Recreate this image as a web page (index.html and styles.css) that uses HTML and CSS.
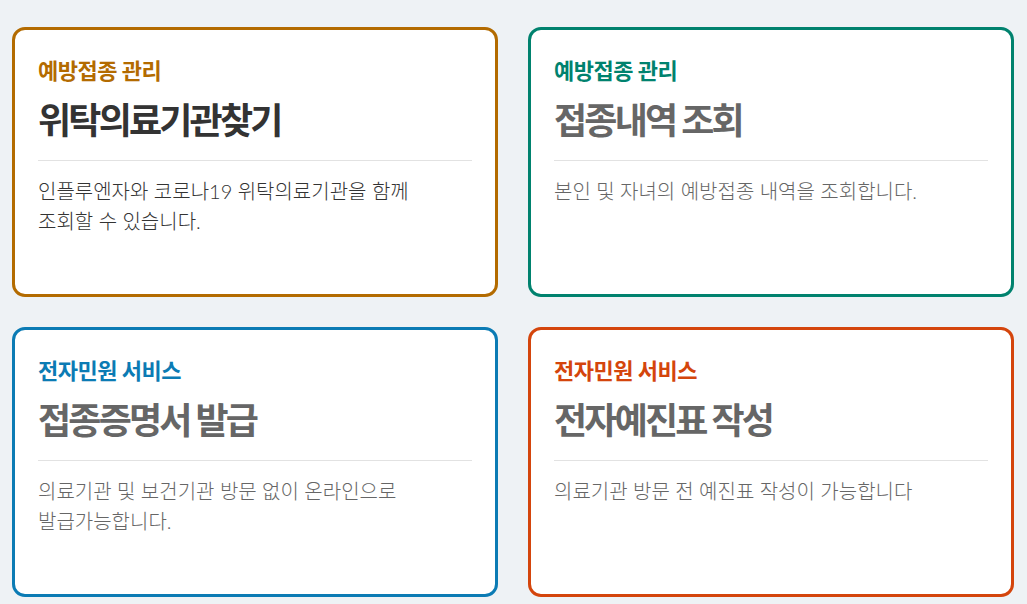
FILE: index.html
```html
<!DOCTYPE html>
<html lang="ko">
<head>
<meta charset="utf-8">
<title>예방접종 서비스</title>
<link rel="stylesheet" href="styles.css">
</head>
<body>
<div class="grid">
  <a class="card card-amber active" href="#">
    <p class="label">예방접종 관리</p>
    <h2 class="title">위탁의료기관찾기</h2>
    <p class="desc">인플루엔자와 코로나19 위탁의료기관을 함께<br>조회할 수 있습니다.</p>
  </a>
  <a class="card card-teal" href="#">
    <p class="label">예방접종 관리</p>
    <h2 class="title">접종내역 조회</h2>
    <p class="desc">본인 및 자녀의 예방접종 내역을 조회합니다.</p>
  </a>
  <a class="card card-blue" href="#">
    <p class="label">전자민원 서비스</p>
    <h2 class="title">접종증명서 발급</h2>
    <p class="desc">의료기관 및 보건기관 방문 없이 온라인으로<br>발급가능합니다.</p>
  </a>
  <a class="card card-red" href="#">
    <p class="label">전자민원 서비스</p>
    <h2 class="title">전자예진표 작성</h2>
    <p class="desc">의료기관 방문 전 예진표 작성이 가능합니다</p>
  </a>
</div>
</body>
</html>
```

FILE: styles.css
```css
html, body {
  margin: 0;
  padding: 0;
}
body {
  background: #eef2f5;
  font-family: "Lato", "Noto Sans CJK KR", sans-serif;
  color: #666;
}
.grid {
  display: grid;
  grid-template-columns: 486px 486px;
  column-gap: 30px;
  row-gap: 30px;
  padding: 27px 0 0 12px;
}
.card {
  display: flex;
  flex-direction: column;
  box-sizing: border-box;
  height: 270px;
  padding: 27px 23px 0 23px;
  border: 3px solid #b36b00;
  border-radius: 13px;
  background: #fff;
  text-decoration: none;
  color: #666;
}
.card-amber { border-color: #b36b00; }
.card-teal { border-color: #00826e; }
.card-blue { border-color: #0b7bb4; }
.card-red { border-color: #d4450c; }
.label {
  margin: 0;
  font-size: 22px;
  line-height: 28px;
  font-weight: 700;
  letter-spacing: -0.5px;
}
.card-amber .label { color: #b36b00; }
.card-teal .label { color: #00826e; }
.card-blue .label { color: #0b7bb4; }
.card-red .label { color: #d4450c; }
.title {
  margin: 12px 0 0 0;
  padding-bottom: 16px;
  border-bottom: 1px solid #e2e2e2;
  font-size: 36px;
  line-height: 47px;
  font-weight: 700;
  letter-spacing: -2.8px;
  color: #666;
}
.desc {
  margin: 15px 0 0 0;
  font-size: 20px;
  line-height: 30px;
  font-weight: 300;
  color: #666;
}
.active .title,
.active .desc {
  color: #333;
}
```
